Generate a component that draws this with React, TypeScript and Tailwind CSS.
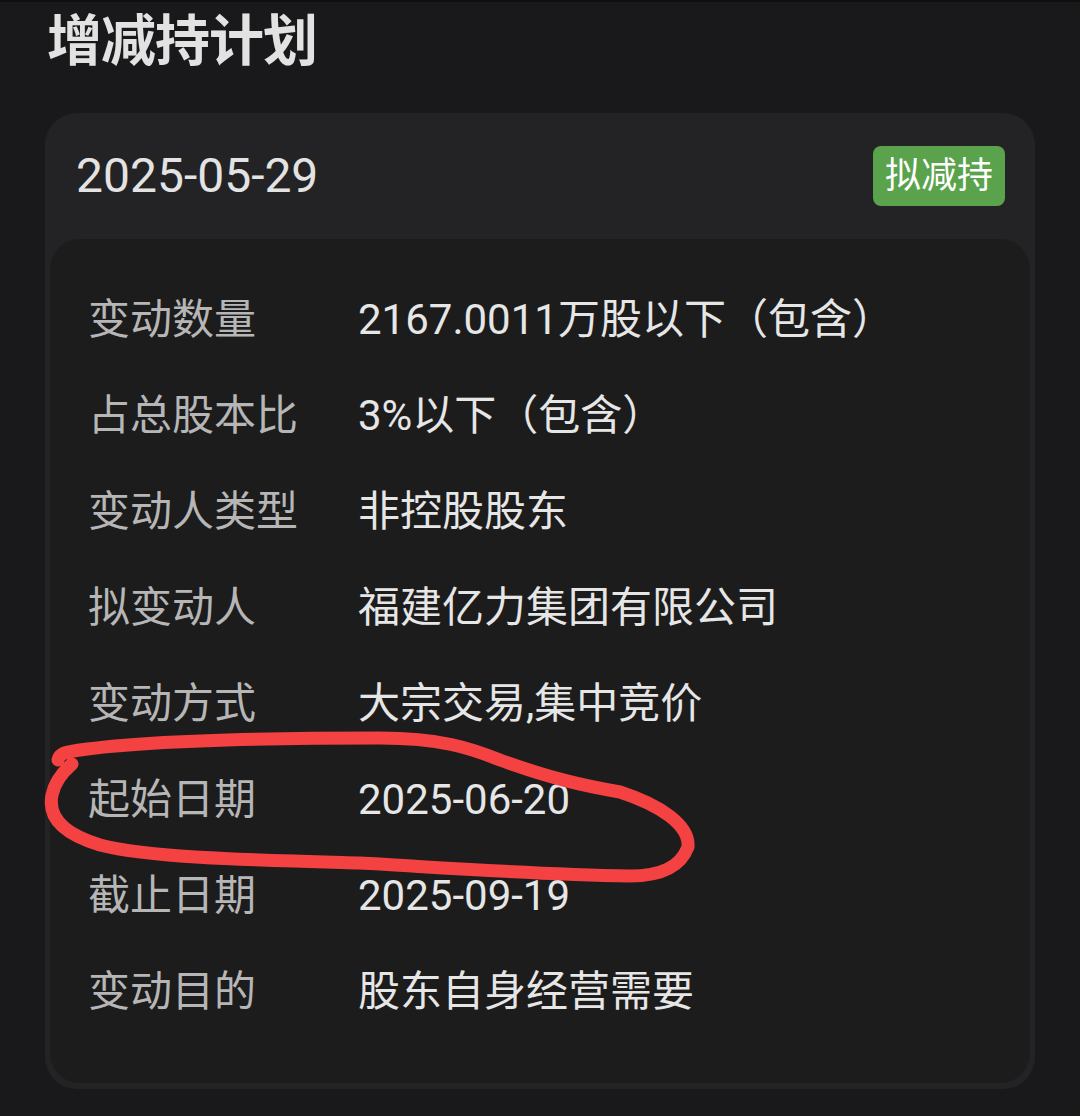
import React from "react";

const rows: [string, string][] = [
  ["变动数量", "2167.0011万股以下（包含）"],
  ["占总股本比", "3%以下（包含）"],
  ["变动人类型", "非控股股东"],
  ["拟变动人", "福建亿力集团有限公司"],
  ["变动方式", "大宗交易,集中竞价"],
  ["起始日期", "2025-06-20"],
  ["截止日期", "2025-09-19"],
  ["变动目的", "股东自身经营需要"],
];

export default function App() {
  return (
    <div
      className="relative w-[1080px] h-[1116px] bg-[#19191b] overflow-hidden"
      style={{ fontFamily: 'Roboto, "Noto Sans CJK SC", sans-serif' }}
    >
      <div className="h-[2px] bg-[#0f0f10]" />
      <div className="pl-[47px] pt-[12px]">
        <div className="h-[54px] text-[55px] leading-[54px] font-bold text-[#e2e2e2] tracking-[-1px]">
          增减持计划
        </div>
      </div>
      <div className="mt-[45px] ml-[45px] w-[990px] rounded-[32px] bg-[#232325] pb-[6px] px-[5px]">
        <div className="h-[126px] flex items-center justify-between pl-[26px] pr-[25px]">
          <span className="text-[48px] text-[#e3e3e3] leading-none">2025-05-29</span>
          <span className="h-[60px] w-[132px] rounded-[8px] bg-[#5aa24b] text-white text-[36px] flex items-center justify-center leading-none">
            拟减持
          </span>
        </div>
        <div className="rounded-[30px] bg-[#1c1c1d] pt-[33px] pb-[43px] pl-[38px]">
          {rows.map(([k, v]) => (
            <div key={k} className="h-[96px] flex items-center text-[42px] leading-none">
              <span className="w-[270px] text-[#b6b6b6]">{k}</span>
              <span className="text-[#e6e6e6]">{v}</span>
            </div>
          ))}
        </div>
      </div>
      <svg
        className="absolute left-0 top-0 pointer-events-none"
        width="1080"
        height="1116"
        viewBox="0 0 1080 1116"
      >
        <path
          d="M58,760 C60,752 68,752 80,750 C150,740 280,738 380,738 C440,738 470,748 500,760 C550,778 580,785 620,792 C660,805 690,825 688,847 C680,868 660,876 630,876 C520,874 420,866 360,863 C250,860 150,858 100,845 C60,833 48,815 52,795 C55,780 65,770 72,764"
          fill="none"
          stroke="#f44141"
          strokeWidth="13"
          strokeLinecap="round"
          strokeLinejoin="round"
        />
      </svg>
    </div>
  );
}
